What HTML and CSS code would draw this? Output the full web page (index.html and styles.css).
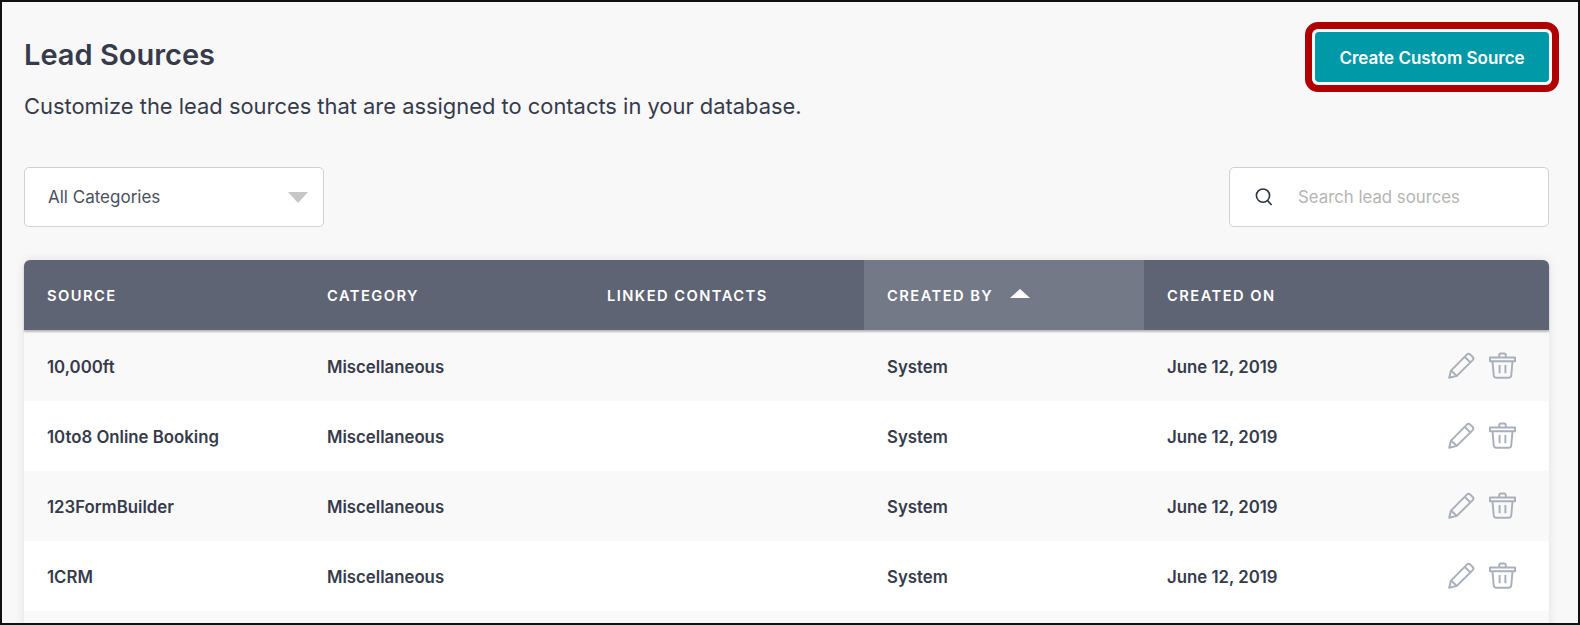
FILE: index.html
```html
<!DOCTYPE html>
<html lang="en">
<head>
<meta charset="utf-8">
<title>Lead Sources</title>
<link rel="stylesheet" href="styles.css">
</head>
<body>
<svg class="defs" width="0" height="0" aria-hidden="true">
  <symbol id="pencil" viewBox="0 0 27 27">
    <path d="M1.2 25.8 3 18.6 18.8 2.6c1-1 2.2-1 3.2-.2l2.7 2.6c.9 1 .9 2.2 0 3.1L8.8 23.9Z" fill="none" stroke="currentColor" stroke-width="2" stroke-linejoin="round"/>
    <path d="M16.6 4.8 22.6 10.6M3 18.6 8.8 23.9" fill="none" stroke="currentColor" stroke-width="2"/>
  </symbol>
  <symbol id="trash" viewBox="0 0 28 27">
    <path d="M1 5.2h26V9H1ZM3.6 9l1.3 14.6c.1 1.6 1.2 2.6 2.8 2.6h12.6c1.6 0 2.7-1 2.8-2.6L24.4 9M10.6 5V2.8c0-1 .7-1.8 1.7-1.8h3.4c1 0 1.7.8 1.7 1.8V5M11 13v8.5M17 13v8.5" fill="none" stroke="currentColor" stroke-width="2" stroke-linejoin="round"/>
  </symbol>
</svg>
<main class="frame">
  <header class="top">
    <div>
      <h1 class="title">Lead Sources</h1>
      <p class="subtitle">Customize the lead sources that are assigned to contacts in your database.</p>
    </div>
    <div class="highlight"><button class="create">Create Custom Source</button></div>
  </header>
  <div class="filters">
    <div class="select"><span>All Categories</span><i class="caret"></i></div>
    <div class="search">
      <svg class="search-icon" viewBox="0 0 20 20" width="20" height="20"><circle cx="9" cy="8.6" r="6.6" fill="none" stroke="currentColor" stroke-width="1.6"/><path d="M13.6 13.6 17.6 18" fill="none" stroke="currentColor" stroke-width="1.6"/></svg>
      <span class="placeholder">Search lead sources</span>
    </div>
  </div>
  <section class="table">
    <div class="row head">
      <div class="cell">SOURCE</div>
      <div class="cell">CATEGORY</div>
      <div class="cell">LINKED CONTACTS</div>
      <div class="cell active">CREATED BY<i class="sort"></i></div>
      <div class="cell">CREATED ON</div>
      <div class="cell"></div>
    </div>
    <div class="row">
      <div class="cell">10,000ft</div><div class="cell">Miscellaneous</div><div class="cell"></div><div class="cell">System</div><div class="cell">June 12, 2019</div>
      <div class="cell actions"><svg class="ico"><use href="#pencil"/></svg><svg class="ico"><use href="#trash"/></svg></div>
    </div>
    <div class="row">
      <div class="cell">10to8 Online Booking</div><div class="cell">Miscellaneous</div><div class="cell"></div><div class="cell">System</div><div class="cell">June 12, 2019</div>
      <div class="cell actions"><svg class="ico"><use href="#pencil"/></svg><svg class="ico"><use href="#trash"/></svg></div>
    </div>
    <div class="row">
      <div class="cell">123FormBuilder</div><div class="cell">Miscellaneous</div><div class="cell"></div><div class="cell">System</div><div class="cell">June 12, 2019</div>
      <div class="cell actions"><svg class="ico"><use href="#pencil"/></svg><svg class="ico"><use href="#trash"/></svg></div>
    </div>
    <div class="row">
      <div class="cell">1CRM</div><div class="cell">Miscellaneous</div><div class="cell"></div><div class="cell">System</div><div class="cell">June 12, 2019</div>
      <div class="cell actions"><svg class="ico"><use href="#pencil"/></svg><svg class="ico"><use href="#trash"/></svg></div>
    </div>
    <div class="row"></div>
  </section>
</main>
</body>
</html>
```
FILE: styles.css
```css
* { box-sizing: border-box; }
html, body { margin: 0; height: 100%; }
body { font-family: "Inter", "Noto Sans", sans-serif; color: #363b4c; overflow: hidden; }
.defs { position: absolute; }
.frame {
  height: 625px;
  border: 2px solid #111;
  background: #f8f8f8;
  padding: 20px 29px 0 22px;
  overflow: hidden;
}
.top { display: flex; justify-content: space-between; align-items: flex-start; height: 145px; }
.title { margin: 16px 0 0; font-size: 29px; line-height: 34px; font-weight: 600; color: #363b4c; }
.subtitle { margin: 19px 0 0; font-size: 21.9px; line-height: 30px; color: #363b4c; }
.highlight {
  border: 7px solid #b00000;
  border-radius: 13px;
  background: #fff;
  padding: 3px;
  margin-right: -10px;
}
.create {
  display: block;
  width: 234px;
  height: 50px;
  padding: 2px 0 0;
  border: 0;
  border-radius: 4px;
  background: #0099a8;
  color: #fff;
  font: 600 17px "Inter", sans-serif;
}
.filters { display: flex; justify-content: space-between; height: 93px; }
.select, .search {
  height: 60px;
  background: #fff;
  border: 1px solid #cfd1d6;
  border-radius: 5px;
  display: flex;
  align-items: center;
  font-size: 17px;
}
.select { width: 300px; padding: 0 15px 0 23px; justify-content: space-between; color: #4a5060; }
.caret { width: 0; height: 0; border: 10px solid transparent; border-top: 11px solid #c6c6c6; border-bottom: 0; }
.search { width: 320px; padding-left: 24px; gap: 24px; }
.search-icon { color: #2f3545; flex: none; }
.placeholder { color: #b5b5b5; font-size: 16.8px; }
.table { box-shadow: 0 0 10px rgba(0,0,0,.1); border-radius: 6px 6px 0 0; }
.row { display: grid; grid-template-columns: 280px 280px 280px 280px 280px 1fr; height: 70px; background: #fff; font-size: 16.8px; font-weight: 600; }
.row:nth-child(even) { background: #f9f9f9; }
.row.head {
  height: 70px;
  margin-bottom: 1px;
  background: #5f6474;
  color: #fff;
  font-size: 14.7px;
  letter-spacing: 1.45px;
  border-radius: 6px 6px 0 0;
  box-shadow: 0 2px 2px rgba(0,0,0,.25);
  position: relative;
}
.cell { display: flex; align-items: center; padding: 1px 0 0 23px; }
.head .cell { padding-top: 2px; }
.cell.active { background: #747987; }
.sort { width: 0; height: 0; margin: -6px 0 0 17px; border: 10px solid transparent; border-bottom: 9px solid #fff; border-top: 0; }
.actions { padding: 0 0 2px 24px; gap: 14px; }
.ico { width: 27px; height: 27px; color: #a9b0bb; flex: none; }
```
